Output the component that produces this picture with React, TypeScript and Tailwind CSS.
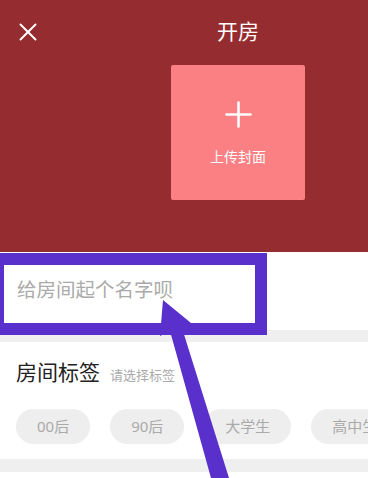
import { X, Plus } from "lucide-react";

const tags = ["00后", "90后", "大学生", "高中生", "上班族"];

export default function App() {
  return (
    <div
      className="relative h-[478px] w-[368px] overflow-hidden bg-white"
      style={{ fontFamily: '"Noto Sans", "Noto Sans CJK SC", sans-serif' }}
    >
      <div className="w-[476px]">
        {/* Header */}
        <div className="h-[252px] bg-[#952d30]">
          <div className="relative flex h-[65px] items-center justify-center">
            <X className="absolute left-[13px] top-[17px] h-[30px] w-[30px] text-white" strokeWidth={1.5} />
            <h1 className="mt-[-2px] text-[21px] text-white">开房</h1>
          </div>
          <div className="flex justify-center">
            <div className="flex h-[135px] w-[134px] flex-col items-center rounded-[2px] bg-[#fb8083] pt-[29px]">
              <Plus className="h-[41px] w-[41px] text-white" strokeWidth={1.5} />
              <span className="mt-[11px] text-[14px] text-white">上传封面</span>
            </div>
          </div>
        </div>

        {/* Room name */}
        <div className="flex h-[78px] items-center px-[17px] pb-[3px]">
          <span className="text-[19.5px] text-[#aaaaaa]">给房间起个名字呗</span>
        </div>
        <div className="h-[12px] bg-[#efefef]" />

        {/* Tags */}
        <div className="h-[117px] px-[16px]">
          <div className="flex items-baseline pt-[15px]">
            <span className="text-[21px] text-[#222222]">房间标签</span>
            <span className="ml-[10px] text-[13px] text-[#aaaaaa]">请选择标签</span>
          </div>
          <div className="mt-[20px] flex gap-[20px]">
            {tags.map((t) => (
              <span
                key={t}
                className="flex h-[35px] shrink-0 items-center rounded-full bg-[#eeeeee] px-[21px] text-[15px] text-[#aaaaaa]"
              >
                {t}
              </span>
            ))}
          </div>
        </div>
        <div className="h-[13px] bg-[#efefef]" />
      </div>

      {/* Annotation box */}
      <div className="absolute left-[-8px] top-[253px] h-[82px] w-[275px] border-[12px] border-[#5a30cc]" />

      {/* Annotation arrow */}
      <svg className="absolute left-0 top-0" width="368" height="478" viewBox="0 0 368 478">
        <polygon points="163,300 191,323 182,328 229,478 211,478 170,331 160,336" fill="#5a30cc" />
      </svg>
    </div>
  );
}
